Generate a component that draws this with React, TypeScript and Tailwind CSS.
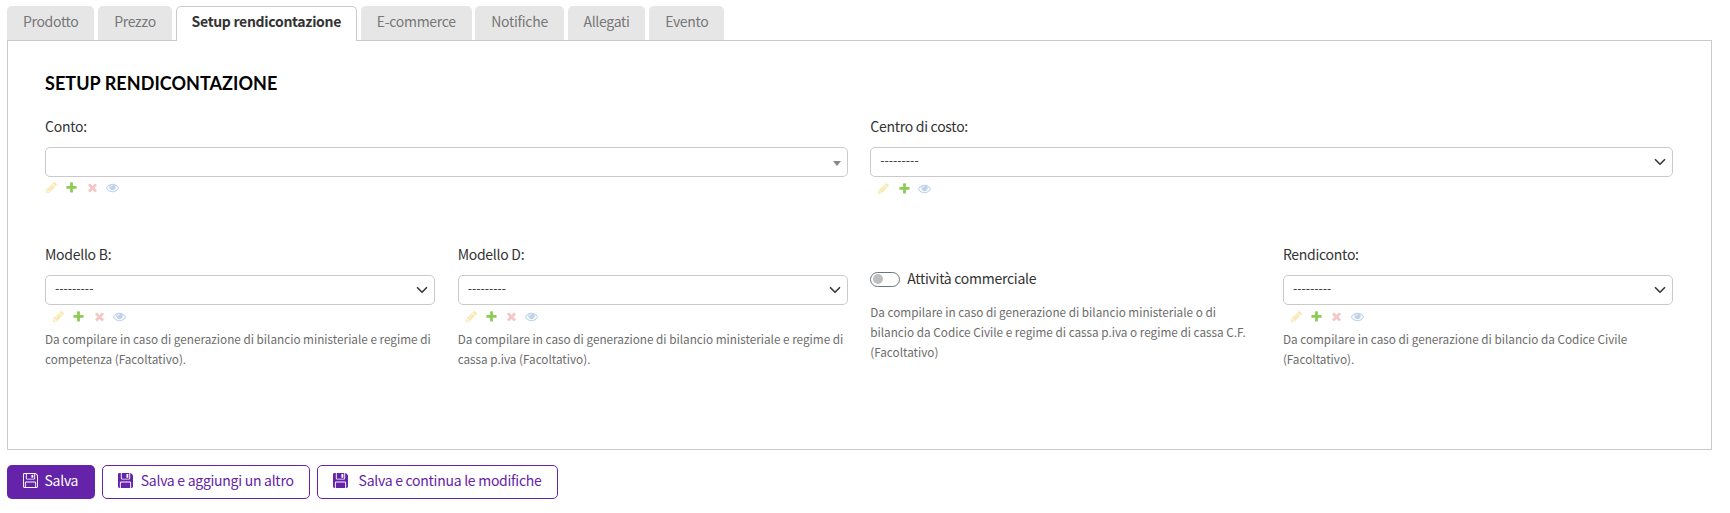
import clsx from 'clsx';
import { BsFloppy, BsFloppyFill } from 'react-icons/bs';

const tabs = [
  'Prodotto',
  'Prezzo',
  'Setup rendicontazione',
  'E-commerce',
  'Notifiche',
  'Allegati',
  'Evento',
];

const icons = {
  change: {
    className: 'fill-[#efb80b] opacity-30',
    path: 'M491 1536l91-91-235-235-91 91v107h128v128h107zm523-928q0-22-22-22-10 0-17 7l-542 542q-7 7-7 17 0 22 22 22 10 0 17-7l542-542q7-7 7-17zm-54-192l416 416-832 832h-416v-416zm683 96q0 53-37 90l-166 166-416-416 166-165q36-38 90-38 53 0 91 38l235 234q37 39 37 91z',
  },
  add: {
    className: 'fill-[#70bf2b] opacity-80',
    path: 'M1600 796v192q0 40-28 68t-68 28h-416v416q0 40-28 68t-68 28h-192q-40 0-68-28t-28-68v-416h-416q-40 0-68-28t-28-68v-192q0-40 28-68t68-28h416v-416q0-40 28-68t68-28h192q40 0 68 28t28 68v416h416q40 0 68 28t28 68z',
  },
  delete: {
    className: 'fill-[#dd4646] opacity-30',
    path: 'M1490 1322q0 40-28 68l-136 136q-28 28-68 28t-68-28l-294-294-294 294q-28 28-68 28t-68-28l-136-136q-28-28-28-68t28-68l294-294-294-294q-28-28-28-68t28-68l136-136q28-28 68-28t68 28l294 294 294-294q28-28 68-28t68 28l136 136q28 28 28 68t-28 68l-294 294 294 294q28 28 28 68z',
  },
  view: {
    className: 'fill-[#2b70bf] opacity-30',
    path: 'M1664 960q-152-236-381-353 61 104 61 225 0 185-131.5 316.5t-316.5 131.5-316.5-131.5-131.5-316.5q0-121 61-225-229 117-381 353 133 205 333.5 326.5t434.5 121.5 434.5-121.5 333.5-326.5zm-720-384q0-20-14-34t-34-14q-125 0-214.5 89.5t-89.5 214.5q0 20 14 34t34 14 34-14 14-34q0-86 61-147t147-61q20 0 34-14t14-34zm848 384q0 34-20 69-140 230-376.5 368.5t-499.5 138.5-499.5-139-376.5-368q-20-35-20-69t20-69q140-229 376.5-368t499.5-139 499.5 139 376.5 368q20 35 20 69z',
  },
};

type IconName = keyof typeof icons;

function RelatedLinks({ names, className }: { names: IconName[]; className?: string }) {
  return (
    <div className={clsx('flex gap-[7.25px]', className)}>
      {names.map((name) => (
        <svg
          key={name}
          viewBox="0 0 1792 1792"
          className={clsx('h-[13px] w-[13px]', icons[name].className)}
        >
          <path d={icons[name].path} />
        </svg>
      ))}
    </div>
  );
}

function Label({ children }: { children: string }) {
  return (
    <label className="block h-[20px] text-[14px] leading-[18px] tracking-[-0.27px]">
      {children}
    </label>
  );
}

function Select() {
  return (
    <div className="mt-[10px] flex h-[30px] items-center justify-between rounded-[5px] border border-[#cacaca] pl-[9px] pr-[6px]">
      <span className="pb-[3px] text-[12.3px] leading-none">---------</span>
      <svg viewBox="0 0 16 16" className="h-3 w-3 fill-none stroke-[#343a40]" strokeWidth="2.2">
        <path d="m2 5 6 6 6-6" strokeLinecap="round" strokeLinejoin="round" />
      </svg>
    </div>
  );
}

function Help({ children, className }: { children: string; className?: string }) {
  return (
    <p className={clsx('text-[11.74px] leading-[20px] text-[#6c6c6c]', className)}>{children}</p>
  );
}

export default function App() {
  return (
    <div className="h-[513px] bg-white pl-[7px] pr-[18px] pt-[6px] font-['Noto_Sans_CJK_SC',sans-serif] text-[#333]">
      {/* Tabs */}
      <ul className="flex h-[34px] gap-[3.8px] text-[14px] leading-[20px] tracking-[-0.3px]">
        {tabs.map((tab, i) => (
          <li
            key={tab}
            className={clsx(
              'rounded-t-[5px] whitespace-nowrap',
              i === 2
                ? 'relative h-[35px] border border-b-0 border-[#cacaca] bg-white px-[15px] pt-[4px] font-bold'
                : 'bg-[#e6e6e6] px-[15.9px] pt-[5px] text-[#777]',
            )}
          >
            {tab}
          </li>
        ))}
      </ul>

      {/* Panel */}
      <div className="h-[410px] border border-[#cacaca] pl-[37px] pr-[38px] pt-[31px]">
        <h2 className="h-[22px] font-['Lato',sans-serif] text-[18px] leading-[22px] font-bold tracking-[0.05px] text-black">
          SETUP RENDICONTAZIONE
        </h2>

        <div className="mt-[23px] grid h-[128px] grid-cols-2 gap-[22.5px]">
          <div>
            <Label>Conto:</Label>
            <div className="mt-[10px] flex h-[30px] items-center justify-end rounded-[5px] border border-[#cacaca] pr-[6px]">
              <span className="mt-[2px] border-x-4 border-t-5 border-x-transparent border-t-[#888]" />
            </div>
            <RelatedLinks names={['change', 'add', 'delete', 'view']} className="mt-[4px]" />
          </div>
          <div>
            <Label>Centro di costo:</Label>
            <Select />
            <RelatedLinks names={['change', 'add', 'view']} className="mt-[5px] ml-[7px]" />
          </div>
        </div>

        <div className="grid grid-cols-4 gap-[22.5px]">
          <div>
            <Label>Modello B:</Label>
            <Select />
            <RelatedLinks names={['change', 'add', 'delete', 'view']} className="mt-[5px] ml-[7px]" />
            <Help className="mt-[6px]">
              Da compilare in caso di generazione di bilancio ministeriale e regime di competenza (Facoltativo).
            </Help>
          </div>
          <div>
            <Label>Modello D:</Label>
            <Select />
            <RelatedLinks names={['change', 'add', 'delete', 'view']} className="mt-[5px] ml-[7px]" />
            <Help className="mt-[6px]">
              Da compilare in caso di generazione di bilancio ministeriale e regime di cassa p.iva (Facoltativo).
            </Help>
          </div>
          <div className="pt-[24px]">
            <label className="flex h-[20px] items-center gap-[7px] text-[14px] leading-[18px] tracking-[-0.27px]">
              <span className="flex h-[15px] w-[30px] items-center rounded-full border border-[#6c757d] pl-[2px]">
                <span className="h-[10px] w-[10px] rounded-full bg-[#bfbfbf]" />
              </span>
              <span className="pb-[2px]">Attività commerciale</span>
            </label>
            <Help className="mt-[13px]">
              Da compilare in caso di generazione di bilancio ministeriale o di bilancio da Codice Civile e regime di cassa p.iva o regime di cassa C.F. (Facoltativo)
            </Help>
          </div>
          <div>
            <Label>Rendiconto:</Label>
            <Select />
            <RelatedLinks names={['change', 'add', 'delete', 'view']} className="mt-[5px] ml-[7px]" />
            <Help className="mt-[6px]">
              Da compilare in caso di generazione di bilancio da Codice Civile (Facoltativo).
            </Help>
          </div>
        </div>
      </div>

      {/* Actions */}
      <div className="mt-[15px] flex h-[34px] gap-[7px] text-[14px] leading-[20px] tracking-[-0.27px] text-[#6423a8]">
        <button className="flex items-center gap-[7px] rounded-[5px] bg-[#6423a8] pr-[17px] pb-[4px] pl-[15.5px] text-white">
          <BsFloppy className="h-[15px] w-[15px]" />
          Salva
        </button>
        <button className="flex items-center gap-[7.5px] rounded-[5px] border border-[#6423a8] px-[15px] pb-[4px]">
          <BsFloppyFill className="h-[15px] w-[15px]" />
          Salva e aggiungi un altro
        </button>
        <button className="flex items-center gap-[11px] rounded-[5px] border border-[#6423a8] px-[15px] pb-[4px]">
          <BsFloppyFill className="h-[15px] w-[15px]" />
          Salva e continua le modifiche
        </button>
      </div>
    </div>
  );
}
